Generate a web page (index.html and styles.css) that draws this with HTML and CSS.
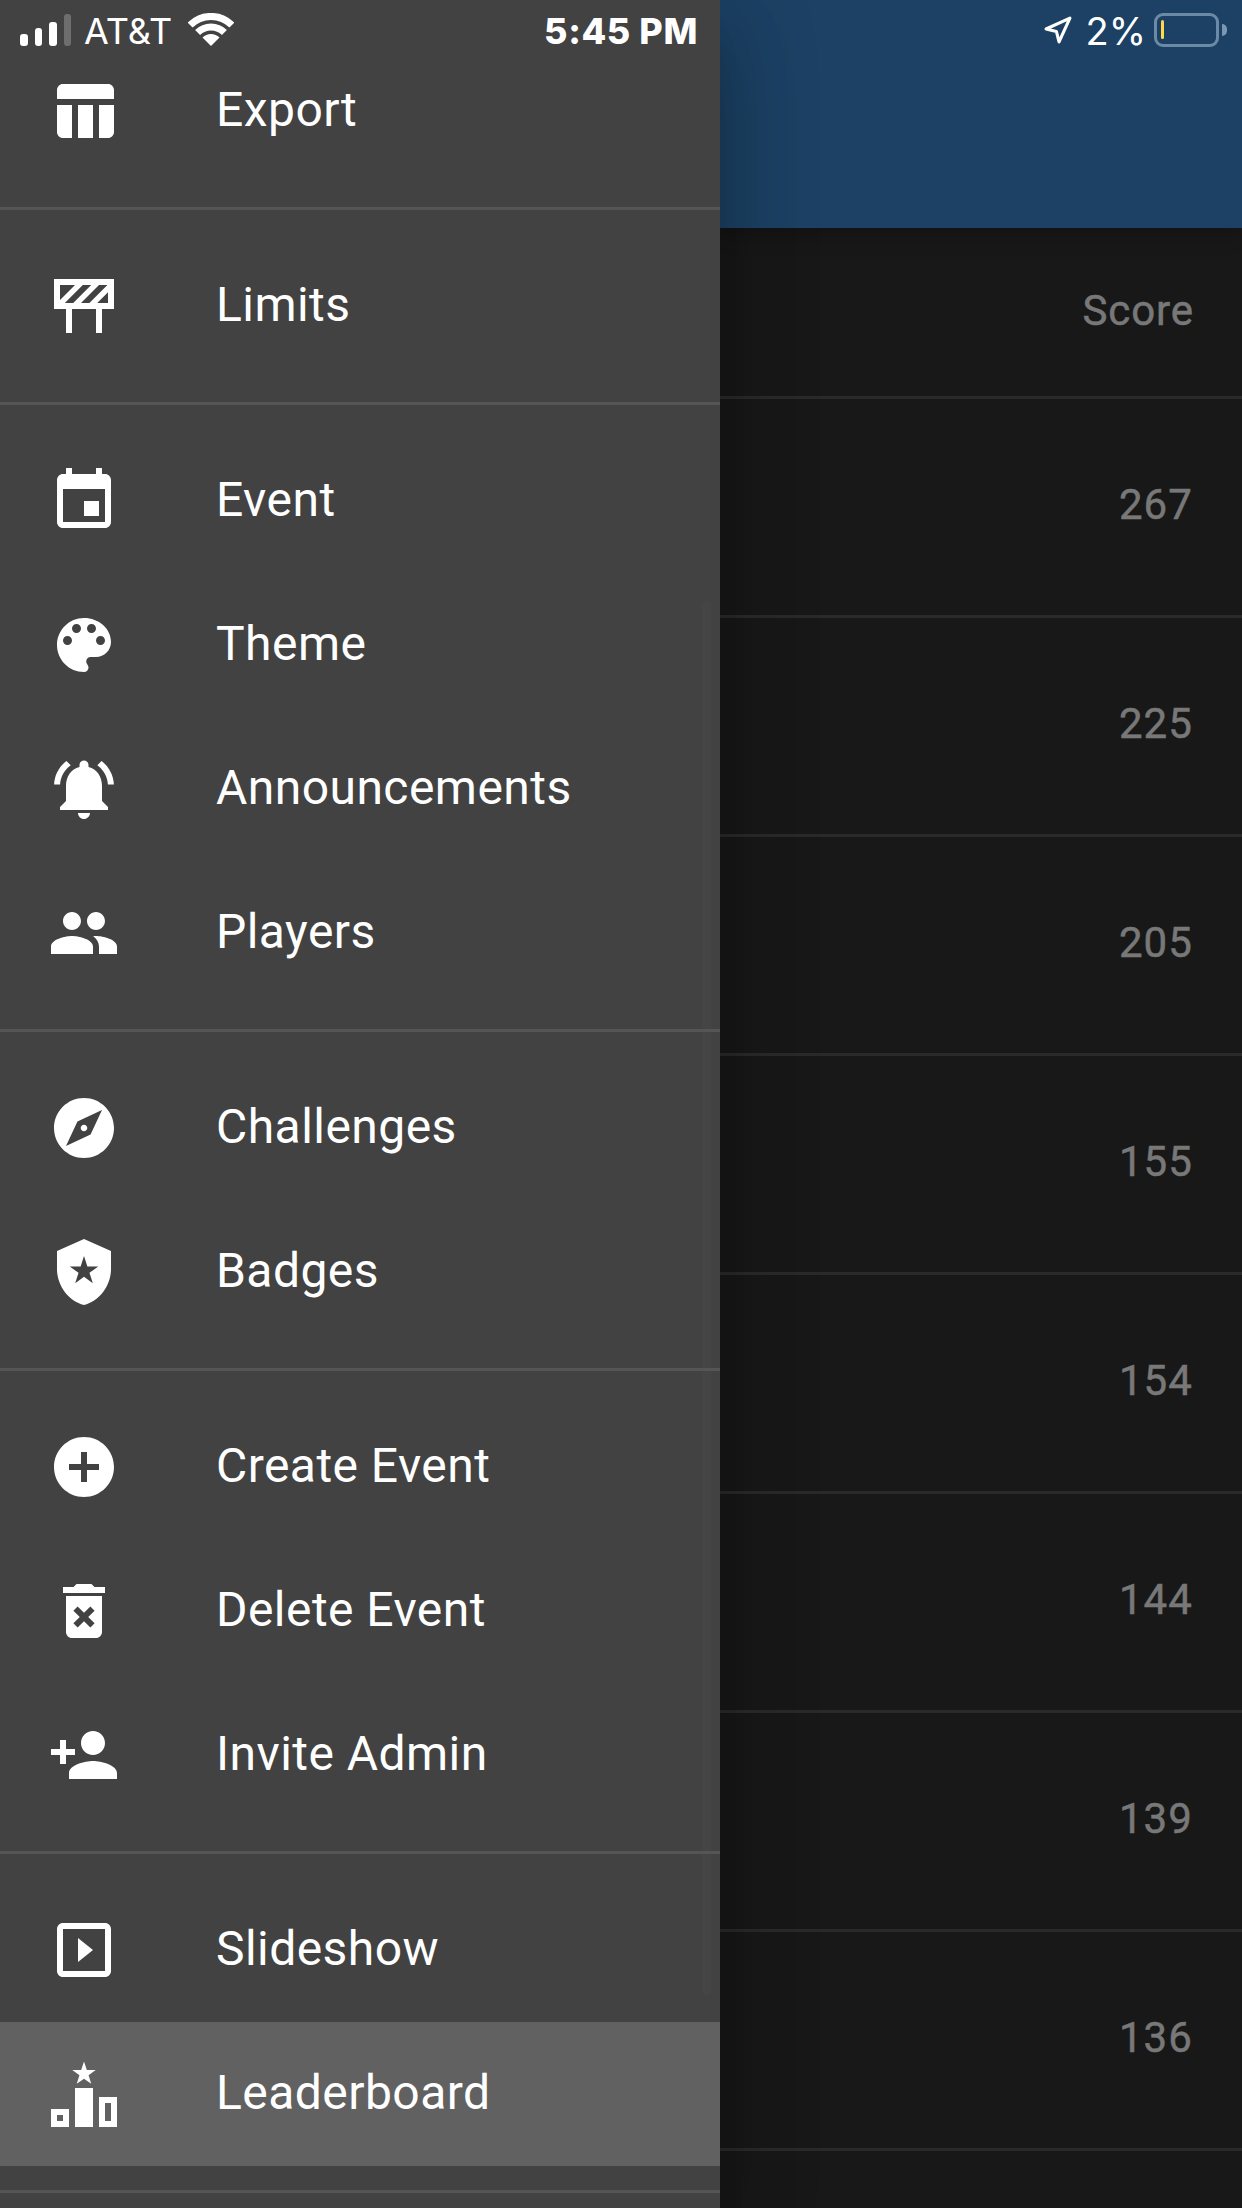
FILE: index.html
```html
<!DOCTYPE html>
<html lang="en">
<head>
<meta charset="utf-8">
<title>Leaderboard</title>
<link rel="stylesheet" href="styles.css">
</head>
<body>
<div class="app">
  <nav class="drawer">
    <span class="scrollbar"></span>
    <section class="group group-first">
      <div class="item"><svg class="icon" viewBox="0 0 24 24"><path d="M10 10.020h5V21h-5zM17 21h3c1.100 0 2-.9 2-2v-9h-5v11zm3-18H5c-1.100 0-2 .9-2 2v3h19V5c0-1.100-.9-2-2-2zM3 19c0 1.100.9 2 2 2h3V10H3v9z"/></svg><span class="label">Export</span></div>
    </section>
    <section class="group">
      <div class="item"><svg class="icon" viewBox="0 0 24 24"><defs><clipPath id="inner"><rect x="4" y="5" width="16" height="6"/></clipPath></defs><path d="M2 3h20v10h-4v8h-2v-8H8v8H6v-8H2z"/><rect class="cut" x="4" y="5" width="16" height="6"/><g clip-path="url(#inner)"><path d="M9 5h2.600l-6 6H3zM14.400 5H17l-6 6H8.400zM19.800 5h2.600l-6 6h-2.600z"/></g></svg><span class="label">Limits</span></div>
    </section>
    <section class="group">
      <div class="item"><svg class="icon" viewBox="0 0 24 24"><path d="M17 12h-5v5h5v-5zM16 1v2H8V1H6v2H5c-1.110 0-1.990.9-1.990 2L3 19c0 1.100.89 2 2 2h14c1.100 0 2-.9 2-2V5c0-1.100-.9-2-2-2h-1V1h-2zm3 18H5V8h14v11z"/></svg><span class="label">Event</span></div>
      <div class="item"><svg class="icon" viewBox="0 0 24 24"><path d="M12 3c-4.970 0-9 4.030-9 9s4.030 9 9 9c.83 0 1.500-.67 1.500-1.500 0-.39-.15-.74-.39-1.010-.23-.26-.38-.61-.38-.99 0-.83.67-1.500 1.500-1.500H16c2.760 0 5-2.240 5-5 0-4.420-4.030-8-9-8zm-5.500 9c-.83 0-1.500-.67-1.500-1.500S5.670 9 6.500 9 8 9.670 8 10.500 7.330 12 6.500 12zm3-4C8.670 8 8 7.330 8 6.500S8.670 5 9.500 5s1.500.67 1.500 1.500S10.330 8 9.500 8zm5 0c-.83 0-1.500-.67-1.500-1.500S13.670 5 14.500 5s1.500.67 1.500 1.500S15.330 8 14.500 8zm3 4c-.83 0-1.500-.67-1.500-1.500S16.670 9 17.500 9s1.500.67 1.500 1.500-.67 1.500-1.500 1.500z"/></svg><span class="label">Theme</span></div>
      <div class="item"><svg class="icon" viewBox="0 0 24 24"><path d="M7.580 4.080L6.150 2.650C3.750 4.480 2.170 7.300 2.030 10.500h2c.15-2.650 1.510-4.970 3.550-6.420zm12.390 6.420h2c-.15-3.200-1.730-6.020-4.120-7.850l-1.420 1.430c2.020 1.450 3.390 3.770 3.540 6.420zM18 11c0-3.070-1.640-5.640-4.500-6.320V4c0-.83-.67-1.500-1.500-1.500s-1.500.67-1.500 1.500v.68C7.630 5.360 6 7.920 6 11v5l-2 2v1h16v-1l-2-2v-5zm-6 11c.14 0 .27-.01.4-.04.65-.14 1.180-.58 1.440-1.180.1-.24.15-.5.15-.78h-4c.01 1.100.9 2 2.010 2z"/></svg><span class="label">Announcements</span></div>
      <div class="item"><svg class="icon" viewBox="0 0 24 24"><path d="M16 11c1.660 0 2.990-1.340 2.990-3S17.660 5 16 5c-1.660 0-3 1.340-3 3s1.340 3 3 3zm-8 0c1.660 0 2.990-1.340 2.990-3S9.660 5 8 5C6.340 5 5 6.340 5 8s1.340 3 3 3zm0 2c-2.330 0-7 1.170-7 3.500V19h14v-2.500c0-2.330-4.670-3.500-7-3.500zm8 0c-.29 0-.62.02-.97.05 1.160.84 1.970 1.970 1.970 3.450V19h6v-2.500c0-2.330-4.670-3.500-7-3.500z"/></svg><span class="label">Players</span></div>
    </section>
    <section class="group">
      <div class="item"><svg class="icon" viewBox="0 0 24 24"><path d="M12 10.900c-.61 0-1.100.49-1.100 1.100s.49 1.100 1.100 1.100c.61 0 1.100-.49 1.100-1.100s-.49-1.100-1.100-1.100zM12 2C6.480 2 2 6.480 2 12s4.480 10 10 10 10-4.480 10-10S17.520 2 12 2zm2.190 12.190L6 18l3.810-8.190L18 6l-3.810 8.190z"/></svg><span class="label">Challenges</span></div>
      <div class="item"><svg class="icon" viewBox="0 0 24 24"><path fill-rule="evenodd" d="M12 1L3 5v6c0 5.550 3.840 10.740 9 12 5.160-1.260 9-6.450 9-12V5zM12 6.700l1.120 3.450h3.640l-2.940 2.140 1.120 3.460L12 13.610l-2.940 2.140 1.120-3.460-2.940-2.140h3.640z"/></svg><span class="label">Badges</span></div>
    </section>
    <section class="group">
      <div class="item"><svg class="icon" viewBox="0 0 24 24"><path d="M12 2C6.480 2 2 6.480 2 12s4.480 10 10 10 10-4.480 10-10S17.520 2 12 2zm5 11h-4v4h-2v-4H7v-2h4V7h2v4h4v2z"/></svg><span class="label">Create Event</span></div>
      <div class="item"><svg class="icon" viewBox="0 0 24 24"><path d="M6 19c0 1.100.9 2 2 2h8c1.100 0 2-.9 2-2V7H6v12zm2.460-7.120l1.410-1.410L12 12.590l2.120-2.120 1.410 1.410L13.410 14l2.120 2.120-1.410 1.410L12 15.410l-2.120 2.120-1.410-1.410L10.590 14l-2.130-2.120zM15.500 4l-1-1h-5l-1 1H5v2h14V4z"/></svg><span class="label">Delete Event</span></div>
      <div class="item"><svg class="icon" viewBox="0 0 24 24"><path d="M15 12c2.210 0 4-1.790 4-4s-1.790-4-4-4-4 1.790-4 4 1.790 4 4 4zm-9-2V7H4v3H1v2h3v3h2v-3h3v-2H6zm9 4c-2.670 0-8 1.340-8 4v2h16v-2c0-2.660-5.330-4-8-4z"/></svg><span class="label">Invite Admin</span></div>
    </section>
    <section class="group">
      <div class="item"><svg class="icon" viewBox="0 0 24 24"><path d="M10 8v8l5-4-5-4zm9-5H5c-1.100 0-2 .9-2 2v14c0 1.100.9 2 2 2h14c1.100 0 2-.9 2-2V5c0-1.100-.9-2-2-2zm0 16H5V5h14v14z"/></svg><span class="label">Slideshow</span></div>
      <div class="item item-active"><svg class="icon" viewBox="0 0 24 24"><path fill-rule="evenodd" d="M12 1.200l.95 2.830h2.950l-2.370 1.750.88 2.840L12 6.900l-2.410 1.720.88-2.840L8.100 4.030h2.950zM9 10h6v13H9zM1 17h6v6H1zM3 19v2h2v-2zM17 13h6v10h-6zM19 15v6h2v-6z"/></svg><span class="label">Leaderboard</span></div>
    </section>
    <section class="group"></section>
  </nav>
  <main class="board">
    <header class="topbar"></header>
    <div class="row row-head">Score</div>
    <div class="row">267</div>
    <div class="row">225</div>
    <div class="row">205</div>
    <div class="row">155</div>
    <div class="row">154</div>
    <div class="row">144</div>
    <div class="row">139</div>
    <div class="row">136</div>
  </main>
  <div class="status">
    <div class="status-left">
      <div class="signal"><i class="bar bar-1"></i><i class="bar bar-2"></i><i class="bar bar-3"></i><i class="bar bar-4"></i></div>
      <span class="carrier">AT&amp;T</span>
      <svg class="wifi" viewBox="0 0 46 33"><path d="M2.100 12.100a29.500 29.500 0 0 1 41.800 0M9.600 19.600a19 19 0 0 1 26.800 0" fill="none" stroke="#fff" stroke-width="7"/><path d="M23 33L14.500 24.500A12 12 0 0 1 31.500 24.500z" fill="#fff"/></svg>
      <span class="clock">5:45 PM</span>
    </div>
    <div class="status-right">
      <svg class="arrow" viewBox="0 0 27 27"><path d="M2 12.500L25 2 14.500 25 12 15z" fill="none" stroke="#fff" stroke-width="3" stroke-linejoin="round"/></svg>
      <span class="percent">2%</span>
      <div class="battery"><i class="charge"></i></div>
      <i class="battery-tip"></i>
    </div>
  </div>
</div>
</body>
</html>
```
FILE: styles.css
```css
* { box-sizing: border-box; }

html, body {
  margin: 0;
  height: 2208px;
  overflow: hidden;
  background: #181818;
}

.app {
  position: relative;
  display: grid;
  grid-template-columns: 720px 1fr;
  height: 2208px;
  overflow: hidden;
  font-family: Roboto, "Liberation Sans", sans-serif;
}

.drawer {
  position: relative;
  z-index: 2;
  height: 2208px;
  overflow: hidden;
  background: #424242;
  color: #fff;
  box-shadow: 0 24px 30px -15px rgba(0, 0, 0, .2), 0 48px 72px 6px rgba(0, 0, 0, .14), 0 18px 90px 15px rgba(0, 0, 0, .12);
}

.scrollbar {
  position: absolute;
  top: 600px;
  right: 9px;
  width: 9px;
  height: 1395px;
  border-radius: 5px;
  background: #454545;
}

.group {
  position: relative;
  padding: 24px 0;
  border-bottom: 3px solid #555;
}

.group-first { padding-top: 39px; }

.item {
  display: flex;
  align-items: center;
  gap: 96px;
  height: 144px;
  padding-left: 48px;
  font-size: 48px;
  letter-spacing: .45px;
}

.label { padding-bottom: 3px; }

.item-active { background: #616161; }

.icon {
  flex: none;
  width: 72px;
  height: 72px;
  fill: #fff;
}

.icon .cut { fill: #424242; }

.board {
  min-width: 0;
  color: #787878;
}

.topbar {
  height: 228px;
  background: #1c4164;
  box-shadow: 0 6px 18px rgba(0, 0, 0, .25);
  position: relative;
}

.row {
  display: flex;
  align-items: center;
  justify-content: flex-end;
  height: 219px;
  padding: 0 49px 6px 0;
  border-bottom: 3px solid #2a2a2a;
  font-size: 42px;
  letter-spacing: 1.1px;
  -webkit-text-stroke: .5px #787878;
}

.row-head {
  height: 171px;
  padding: 0 48px 3px 0;
  letter-spacing: .9px;
}

.status {
  position: absolute;
  top: 0;
  left: 0;
  z-index: 3;
  display: flex;
  width: 100%;
  height: 62px;
  color: #fff;
  font-family: Inter, Roboto, sans-serif;
}

.status-left {
  display: flex;
  align-items: flex-start;
  width: 698px;
  padding-left: 20px;
}

.signal {
  display: flex;
  align-items: flex-end;
  gap: 7px;
  height: 32px;
  margin-top: 14px;
}

.bar {
  width: 7.5px;
  border-radius: 3px;
  background: #fff;
}

.bar-1 { height: 12px; }
.bar-2 { height: 18px; }
.bar-3 { height: 24px; }
.bar-4 { height: 32px; background: #6e6e6e; }

.carrier {
  margin-left: 13px;
  font-size: 36px;
  line-height: 62px;
}

.wifi {
  width: 46px;
  height: 33px;
  margin: 13px 0 0 16px;
}

.clock {
  margin-left: auto;
  font-size: 36px;
  font-weight: 800;
  letter-spacing: .6px;
  line-height: 62px;
}

.status-right {
  position: relative;
  display: flex;
  align-items: flex-start;
  margin-left: auto;
  padding-right: 15px;
}

.arrow {
  width: 28px;
  height: 28px;
  margin-top: 16px;
}

.percent {
  margin-left: 14px;
  font-size: 38px;
  line-height: 62px;
}

.battery {
  width: 65px;
  height: 34px;
  margin: 13px 0 0 8px;
  padding: 4px;
  border: 3px solid #6b8aa5;
  border-radius: 9px;
}

.charge {
  display: block;
  width: 3px;
  height: 19px;
  border-radius: 2px;
  background: #ffd84a;
}

.battery-tip {
  width: 5px;
  height: 12px;
  margin: 24px 0 0 3px;
  border-radius: 0 6px 6px 0;
  background: #7c98b0;
}
```
